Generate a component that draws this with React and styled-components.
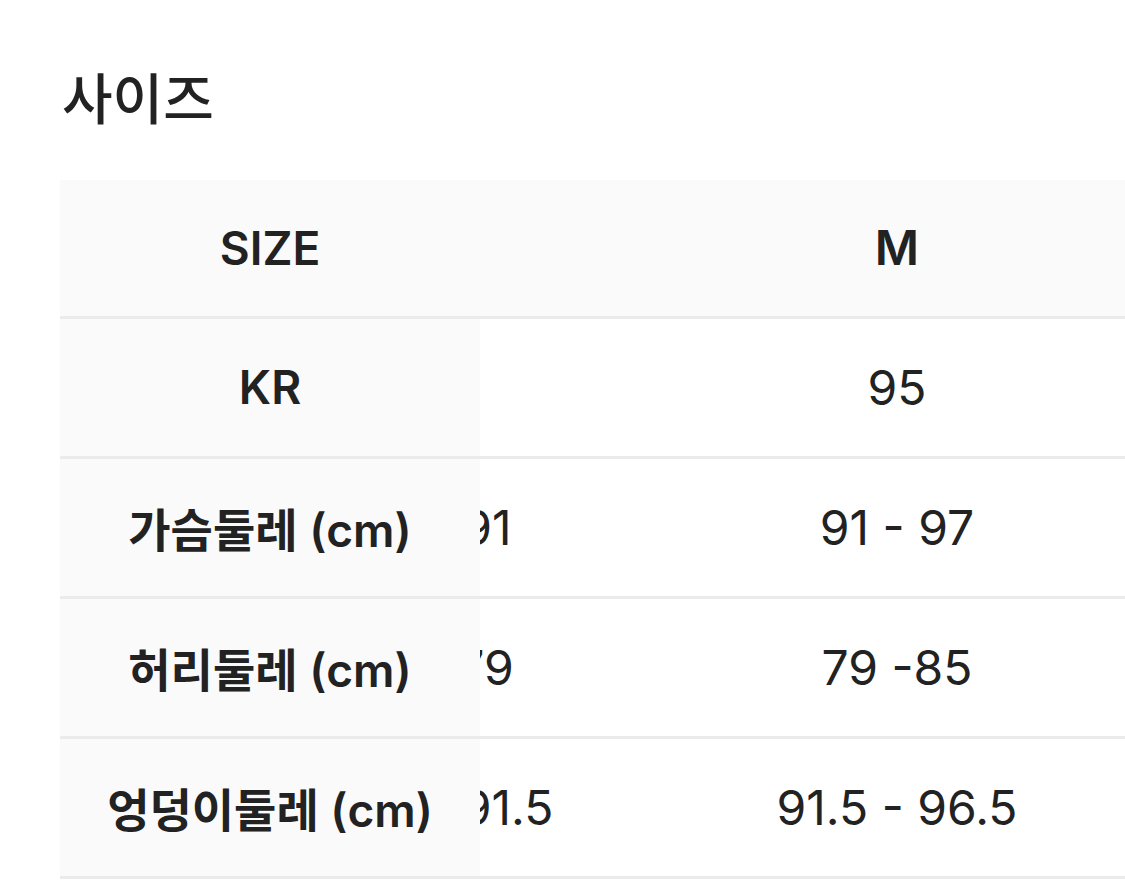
import React, { useLayoutEffect, useRef } from 'react'
import styled, { createGlobalStyle } from 'styled-components'

const GlobalStyle = createGlobalStyle`
  html, body {
    margin: 0;
    padding: 0;
    background: #ffffff;
  }
  body {
    font-family: "Inter", "Noto Sans CJK KR", sans-serif;
    color: #222222;
    overflow: hidden;
  }
`

const Page = styled.div`
  width: 1125px;
  padding: 60px 0 0 60px;
  box-sizing: border-box;
`

const Title = styled.h2`
  margin: 0 0 50px 2px;
  font-size: 55px;
  line-height: 70px;
  font-weight: 500;
  color: #222222;
  font-family: "Noto Sans CJK KR", sans-serif;
`

const ScrollBox = styled.div`
  width: 1065px;
  overflow-x: auto;
  scrollbar-width: none;

  &::-webkit-scrollbar {
    display: none;
  }
`

const Table = styled.table`
  border-collapse: collapse;
  table-layout: fixed;
  width: ${({ $cols }) => 420 + $cols * 464}px;
`

const Row = styled.tr`
  height: ${({ $head }) => ($head ? 137 : 140)}px;
  border-bottom: 3px solid #ebebeb;
`

const Cell = styled.td`
  padding: 0;
  text-align: center;
  vertical-align: middle;
  font-size: 48px;
  font-weight: ${({ $bold }) => ($bold ? 600 : 400)};
  background: ${({ $shade }) => ($shade ? '#fafafa' : '#ffffff')};
  color: #222222;
  white-space: nowrap;
`

const LabelCell = styled(Cell)`
  position: sticky;
  left: 0;
  z-index: 1;
  width: 420px;
  font-size: 46px;
`

const ValueCol = styled.col`
  width: 464px;
`

const LabelCol = styled.col`
  width: 420px;
`

const sizes = ['S', 'M', 'L']

const rows = [
  { label: 'KR', values: ['90', '95', '100'] },
  { label: '가슴둘레 (cm)', values: ['85 - 91', '91 - 97', '97 - 103'] },
  { label: '허리둘레 (cm)', values: ['73 - 79', '79 -85', '85 - 91'] },
  { label: '엉덩이둘레 (cm)', values: ['86.5 - 91.5', '91.5 - 96.5', '96.5 - 101.5'] },
]

function SizeTable() {
  const boxRef = useRef(null)

  useLayoutEffect(() => {
    if (boxRef.current) boxRef.current.scrollLeft = 279
  }, [])

  return (
    <ScrollBox ref={boxRef}>
      <Table $cols={sizes.length}>
        <colgroup>
          <LabelCol />
          {sizes.map((s) => (
            <ValueCol key={s} />
          ))}
        </colgroup>
        <tbody>
          <Row $head>
            <LabelCell $bold $shade>SIZE</LabelCell>
            {sizes.map((s) => (
              <Cell key={s} $bold $shade>{s}</Cell>
            ))}
          </Row>
          {rows.map((r) => (
            <Row key={r.label}>
              <LabelCell $bold $shade>{r.label}</LabelCell>
              {r.values.map((v, i) => (
                <Cell key={i}>{v}</Cell>
              ))}
            </Row>
          ))}
        </tbody>
      </Table>
    </ScrollBox>
  )
}

export default function App() {
  return (
    <Page>
      <GlobalStyle />
      <Title>사이즈</Title>
      <SizeTable />
    </Page>
  )
}
